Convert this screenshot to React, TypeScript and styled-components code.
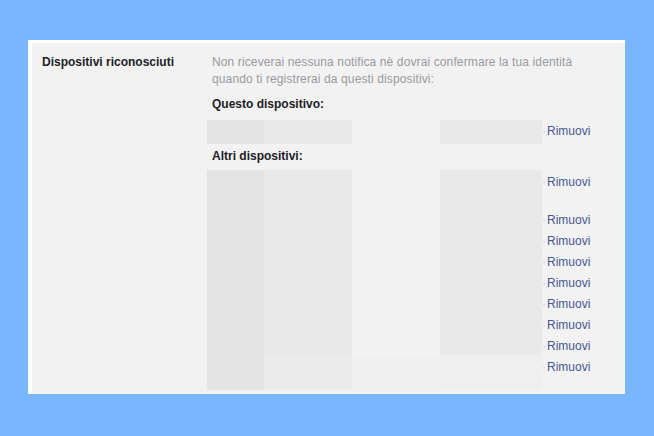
import React from "react";
import styled, { createGlobalStyle } from "styled-components";

const GlobalStyle = createGlobalStyle`
  html, body {
    margin: 0;
    padding: 0;
    background: #78b5fd;
  }
  body {
    font-family: "Liberation Sans", Arial, sans-serif;
    font-size: 12px;
  }
`;

const Page = styled.div`
  width: 654px;
  height: 436px;
  padding: 40px 0 0 28px;
  box-sizing: border-box;
  overflow: hidden;
`;

const Card = styled.section`
  width: 597px;
  height: 354px;
  box-sizing: border-box;
  background: #f2f2f2;
  border-top: 3px solid #ffffff;
  border-left: 4px solid #ffffff;
  padding: 11px 0 4px 10px;
  display: grid;
  grid-template-columns: 165px 1fr;
  align-items: start;
`;

const Label = styled.div`
  font-weight: bold;
  color: #1d2129;
  line-height: 17px;
`;

const Content = styled.div`
  display: flex;
  flex-direction: column;
`;

const Description = styled.p`
  margin: 0;
  padding-left: 5px;
  max-width: 380px;
  color: #999a9e;
  line-height: 17px;
  letter-spacing: 0.12px;
`;

const Heading = styled.div<{ $top: number; $bottom: number }>`
  padding-left: 5px;
  margin-top: ${(p) => p.$top}px;
  margin-bottom: ${(p) => p.$bottom}px;
  font-weight: bold;
  color: #1d2129;
  line-height: 17px;
`;

const DeviceTable = styled.div`
  display: grid;
  grid-template-columns: 57px 88px 88px 102px auto;
`;

type Tone = "a" | "b" | "c" | "d";

const tones: Record<Tone, string> = {
  a: "#e3e3e4",
  b: "#e8e8e9",
  c: "transparent",
  d: "#e9e9e9",
};

const fadedTones: Record<Tone, string> = {
  a: "#e4e4e5",
  b: "#ebebeb",
  c: "#f0f0f0",
  d: "#efefef",
};

const Cell = styled.div<{ $tone: Tone; $faded?: boolean; $h: number }>`
  height: ${(p) => p.$h}px;
  background: ${(p) => (p.$faded ? fadedTones[p.$tone] : tones[p.$tone])};
`;

const Action = styled.div<{ $h: number; $pad: number }>`
  height: ${(p) => p.$h}px;
  box-sizing: border-box;
  padding-top: ${(p) => p.$pad}px;
  line-height: 17px;
  white-space: nowrap;
`;

const Dot = styled.span`
  color: #c8c8cc;
  margin-right: 1px;
`;

const RemoveLink = styled.a`
  color: #485792;
  text-decoration: none;
  cursor: pointer;
`;

type Row = { h: number; pad: number; faded?: boolean };

const DeviceRow: React.FC<Row> = ({ h, pad, faded }) => (
  <>
    {(["a", "b", "c", "d"] as Tone[]).map((t) => (
      <Cell key={t} $tone={t} $faded={faded} $h={h} />
    ))}
    <Action $h={h} $pad={pad}>
      <Dot>·</Dot>
      <RemoveLink>Rimuovi</RemoveLink>
    </Action>
  </>
);

const currentDevice: Row[] = [{ h: 24, pad: 3 }];

const otherDevices: Row[] = [
  { h: 38, pad: 4 },
  { h: 21, pad: 4 },
  { h: 21, pad: 4 },
  { h: 21, pad: 4 },
  { h: 21, pad: 4 },
  { h: 21, pad: 4 },
  { h: 21, pad: 4 },
  { h: 21, pad: 4 },
  { h: 35, pad: 4, faded: true },
];

export default function App() {
  return (
    <>
      <GlobalStyle />
      <Page>
        <Card>
          <Label>Dispositivi riconosciuti</Label>
          <Content>
            <Description>
              Non riceverai nessuna notifica nè dovrai confermare la tua identità quando ti
              registrerai da questi dispositivi:
            </Description>
            <Heading $top={8} $bottom={7}>
              Questo dispositivo:
            </Heading>
            <DeviceTable>
              {currentDevice.map((r, i) => (
                <DeviceRow key={i} {...r} />
              ))}
            </DeviceTable>
            <Heading $top={4} $bottom={5}>
              Altri dispositivi:
            </Heading>
            <DeviceTable>
              {otherDevices.map((r, i) => (
                <DeviceRow key={i} {...r} />
              ))}
            </DeviceTable>
          </Content>
        </Card>
      </Page>
    </>
  );
}
